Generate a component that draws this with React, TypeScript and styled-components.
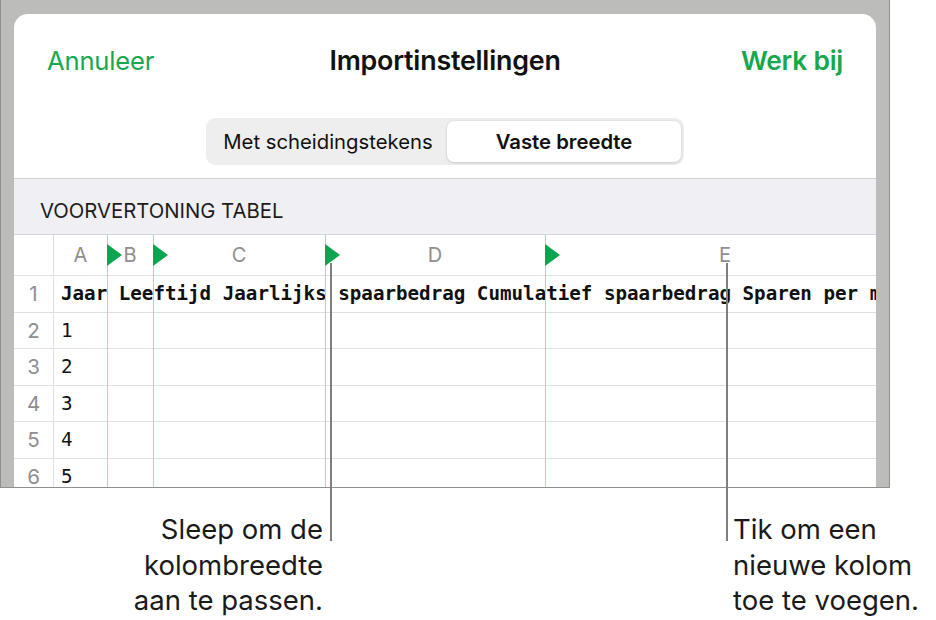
import React from "react";
import styled, { createGlobalStyle } from "styled-components";

const GlobalStyle = createGlobalStyle`
  html, body { margin: 0; padding: 0; background: #ffffff; }
  body { font-family: Inter, "Noto Sans", "Liberation Sans", sans-serif; }
  * { box-sizing: border-box; }
`;

const Page = styled.div`
  position: relative;
  width: 936px;
  height: 620px;
  overflow: hidden;
  background: #ffffff;
`;

const Frame = styled.div`
  width: 890px;
  height: 488px;
  background: #bcbdbb;
  border: 1px solid #8f908e;
  border-top: none;
  padding: 14px 13px 0 13px;
`;

const Card = styled.div`
  height: 100%;
  background: #ffffff;
  border-radius: 14px 14px 0 0;
  overflow: hidden;
  display: flex;
  flex-direction: column;
`;

const NavBar = styled.div`
  height: 92px;
  flex: none;
  display: grid;
  grid-template-columns: 1fr auto 1fr;
  align-items: center;
  padding: 0 33px;
`;

const NavButton = styled.span<{ $bold?: boolean; $right?: boolean }>`
  color: #17a84f;
  font-size: ${(p) => (p.$bold ? "26.3px" : "25.6px")};
  font-weight: ${(p) => (p.$bold ? 600 : 400)};
  justify-self: ${(p) => (p.$right ? "end" : "start")};
  letter-spacing: -0.2px;
`;

const Title = styled.span`
  font-size: 26.8px;
  font-weight: 600;
  color: #111;
  letter-spacing: -0.2px;
`;

const SegmentWrap = styled.div`
  display: flex;
  justify-content: center;
  margin-top: 12px;
  flex: none;
`;

const Segmented = styled.div`
  width: 478px;
  height: 47px;
  background: #eeeeef;
  border-radius: 9px;
  padding: 3px;
  display: flex;
`;

const Segment = styled.div<{ $active?: boolean }>`
  flex: ${(p) => (p.$active ? "0 0 234px" : "1")};
  display: flex;
  align-items: center;
  justify-content: center;
  font-size: 20.3px;
  color: #111;
  font-weight: ${(p) => (p.$active ? 600 : 400)};
  background: ${(p) => (p.$active ? "#ffffff" : "transparent")};
  border-radius: 7px;
  box-shadow: ${(p) =>
    p.$active ? "0 1px 3px rgba(0,0,0,0.13), 0 0 0 0.5px rgba(0,0,0,0.05)" : "none"};
`;

const SectionBand = styled.div`
  margin-top: 13px;
  height: 57px;
  flex: none;
  background: #f0f0f4;
  border-top: 1px solid #d0d0d4;
  border-bottom: 1px solid #d6d6da;
  display: flex;
  align-items: center;
  padding: 8px 0 0 26px;
  font-size: 20.3px;
  color: #1c1c1e;
`;

const Sheet = styled.div`
  position: relative;
  flex: 1;
  overflow: hidden;
`;

const Row = styled.div<{ $header?: boolean }>`
  display: flex;
  height: ${(p) => (p.$header ? "41px" : "36.5px")};
  border-bottom: 1px solid #e0e0e2;
`;

const RowNum = styled.div`
  flex: none;
  width: 40px;
  border-right: 1px solid #dedee0;
  display: flex;
  align-items: center;
  justify-content: center;
  font-size: 20.5px;
  color: #8e8e93;
`;

const ColLetter = styled.div<{ $w: number }>`
  flex: none;
  width: ${(p) => p.$w}px;
  display: flex;
  align-items: center;
  justify-content: center;
  font-size: 20px;
  color: #8e8e93;
`;

const DataCell = styled.div<{ $bold?: boolean }>`
  flex: 1;
  display: flex;
  align-items: center;
  padding-left: 7px;
  white-space: nowrap;
  overflow: hidden;
  font-family: "DejaVu Sans Mono", "Liberation Mono", monospace;
  font-size: 19.2px;
  font-weight: ${(p) => (p.$bold ? 700 : 400)};
  color: #111;
`;

const Divider = styled.div`
  position: absolute;
  top: 0;
  bottom: 0;
  width: 1px;
  background: #a3dcbd;
`;

const Marker = styled.svg`
  position: absolute;
  top: 9px;
  left: 0;
  display: block;
`;

const Callout = styled.div`
  position: absolute;
  width: 2px;
  background: #7f7f7f;
`;

const Notes = styled.div`
  display: flex;
  margin-top: 24px;
  font-size: 27.5px;
  line-height: 35.5px;
  color: #1a1a1a;
`;

const Note = styled.div<{ $align: "left" | "right"; $w: number; $ml?: number }>`
  flex: none;
  width: ${(p) => p.$w}px;
  margin-left: ${(p) => p.$ml ?? 0}px;
  text-align: ${(p) => p.$align};
  white-space: nowrap;
`;

const columns = [
  { l: "A", w: 53 },
  { l: "B", w: 46 },
  { l: "C", w: 172 },
  { l: "D", w: 220 },
  { l: "E", w: 360 },
];

const dividers = [93, 139, 311, 531];

export default function App() {
  return (
    <Page>
      <GlobalStyle />
      <Frame>
        <Card>
          <NavBar>
            <NavButton>Annuleer</NavButton>
            <Title>Importinstellingen</Title>
            <NavButton $bold $right>
              Werk bij
            </NavButton>
          </NavBar>
          <SegmentWrap>
            <Segmented>
              <Segment>Met scheidingstekens</Segment>
              <Segment $active>Vaste breedte</Segment>
            </Segmented>
          </SegmentWrap>
          <SectionBand>VOORVERTONING TABEL</SectionBand>
          <Sheet>
            <Row $header>
              <RowNum />
              {columns.map((c) => (
                <ColLetter key={c.l} $w={c.w}>
                  {c.l}
                </ColLetter>
              ))}
            </Row>
            <Row>
              <RowNum>1</RowNum>
              <DataCell $bold>
                Jaar Leeftijd Jaarlijks spaarbedrag Cumulatief spaarbedrag Sparen per maand
              </DataCell>
            </Row>
            {[1, 2, 3, 4, 5].map((n) => (
              <Row key={n}>
                <RowNum>{n + 1}</RowNum>
                <DataCell>{n}</DataCell>
              </Row>
            ))}
            {dividers.map((x) => (
              <Divider key={x} style={{ left: x }}>
                <Marker width="15" height="22" viewBox="0 0 15 22">
                  <path d="M0 0 L15 11 L0 22 Z" fill="#0ba44f" />
                </Marker>
              </Divider>
            ))}
          </Sheet>
        </Card>
      </Frame>
      <Notes>
        <Note $align="right" $w={323}>
          Sleep om de
          <br />
          kolombreedte
          <br />
          aan te passen.
        </Note>
        <Note $align="left" $w={200} $ml={410}>
          Tik om een
          <br />
          nieuwe kolom
          <br />
          toe te voegen.
        </Note>
      </Notes>
      <Callout style={{ left: 330, top: 263, height: 278 }} />
      <Callout style={{ left: 726, top: 263, height: 278 }} />
    </Page>
  );
}
